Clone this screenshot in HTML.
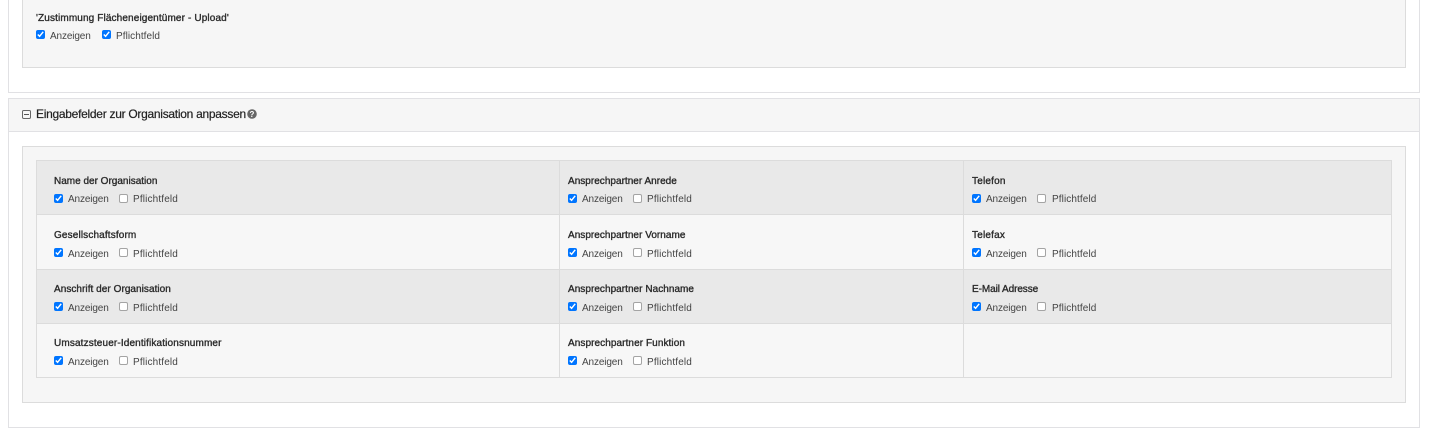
<!DOCTYPE html>
<html lang="de"><head><meta charset="utf-8"><title>Eingabefelder</title>
<style>
html,body{margin:0;padding:0;background:#fff;width:1429px;height:436px;overflow:hidden;font-family:"Liberation Sans",sans-serif}
.b{position:absolute;box-sizing:border-box}
.t{position:absolute;white-space:nowrap;font-size:10px;line-height:14px;height:14px;color:#444;letter-spacing:.15px}
.a{letter-spacing:-.13px}
.p{letter-spacing:.1px}
.l{color:#2b2b2b;-webkit-text-stroke:.35px #2b2b2b;letter-spacing:.04px}
input{position:absolute;margin:0;width:9px;height:9px;accent-color:#0075ff}
input:not(:checked){appearance:none;-webkit-appearance:none;box-sizing:border-box;border:1px solid #a4a4a4;border-radius:2px;background:#fff}
</style></head><body>
<div class="b" style="left:8px;top:-2px;width:1412px;height:95px;border:1px solid #e1e1e4"></div>
<div class="b" style="left:22px;top:-2px;width:1384px;height:70px;background:#f6f6f6;border:1px solid #dcdcdc"></div>
<span class="t l" style="left:36px;top:12px;letter-spacing:.13px">'Zustimmung Flächeneigentümer - Upload'</span>
<input type="checkbox" checked style="left:36px;top:30px"><span class="t a" style="left:50px;top:30px">Anzeigen</span>
<input type="checkbox" checked style="left:102px;top:30px"><span class="t" style="left:116px;top:30px;letter-spacing:.06px">Pflichtfeld</span>

<div class="b" style="left:8px;top:98px;width:1412px;height:330px;border:1px solid #e1e1e4"></div>
<div class="b" style="left:8px;top:98px;width:1412px;height:34px;background:#f6f6f6;border:1px solid #e1e1e4"></div>
<svg class="b" style="left:22px;top:110px" width="9" height="9" viewBox="0 0 9 9"><rect x=".5" y=".5" width="8" height="8" rx="1.2" fill="none" stroke="#666"/><path d="M2 4.5H7" stroke="#555"/></svg>
<span class="t" style="left:36px;top:107px;font-size:12px;color:#222;-webkit-text-stroke:.2px #222;letter-spacing:-.28px">Eingabefelder zur Organisation anpassen</span>
<svg class="b" style="left:247px;top:109px" width="10" height="10" viewBox="0 0 10 10"><circle cx="5" cy="5" r="4.8" fill="#666"/><text x="5" y="8" font-size="8" font-weight="bold" text-anchor="middle" fill="#fff" font-family="Liberation Sans">?</text></svg>

<div class="b" style="left:22px;top:146px;width:1384px;height:257px;background:#f6f6f6;border:1px solid #dcdcdc"></div>
<div class="b" style="left:36px;top:160px;width:1356px;height:218px;background:#f7f7f7;border:1px solid #dcdcdc"></div>
<div class="b" style="left:37px;top:161px;width:1354px;height:53px;background:#e9e9e9"></div>
<div class="b" style="left:37px;top:270px;width:1354px;height:53px;background:#e9e9e9"></div>
<div class="b" style="left:37px;top:214px;width:1354px;height:1px;background:#dcdcdc"></div>
<div class="b" style="left:37px;top:269px;width:1354px;height:1px;background:#dcdcdc"></div>
<div class="b" style="left:37px;top:323px;width:1354px;height:1px;background:#dcdcdc"></div>
<div class="b" style="left:559px;top:161px;width:1px;height:216px;background:#dcdcdc"></div>
<div class="b" style="left:963px;top:161px;width:1px;height:216px;background:#dcdcdc"></div>

<span class="t l" style="left:54px;top:175px;letter-spacing:0">Name der Organisation</span>
<input type="checkbox" checked style="left:54px;top:194px"><span class="t a" style="left:68px;top:193px">Anzeigen</span>
<input type="checkbox" style="left:119px;top:194px"><span class="t" style="left:133px;top:193px">Pflichtfeld</span>
<span class="t l" style="left:54px;top:229px;letter-spacing:.14px">Gesellschaftsform</span>
<input type="checkbox" checked style="left:54px;top:248px"><span class="t a" style="left:68px;top:248px">Anzeigen</span>
<input type="checkbox" style="left:119px;top:248px"><span class="t" style="left:133px;top:248px">Pflichtfeld</span>
<span class="t l" style="left:54px;top:283px;letter-spacing:.05px">Anschrift der Organisation</span>
<input type="checkbox" checked style="left:54px;top:302px"><span class="t a" style="left:68px;top:302px">Anzeigen</span>
<input type="checkbox" style="left:119px;top:302px"><span class="t" style="left:133px;top:302px">Pflichtfeld</span>
<span class="t l" style="left:54px;top:337px;letter-spacing:.14px">Umsatzsteuer-Identifikationsnummer</span>
<input type="checkbox" checked style="left:54px;top:356px"><span class="t a" style="left:68px;top:356px">Anzeigen</span>
<input type="checkbox" style="left:119px;top:356px"><span class="t" style="left:133px;top:356px">Pflichtfeld</span>

<span class="t l" style="left:568px;top:175px;letter-spacing:.02px">Ansprechpartner Anrede</span>
<input type="checkbox" checked style="left:568px;top:194px"><span class="t a" style="left:582px;top:193px">Anzeigen</span>
<input type="checkbox" style="left:633px;top:194px"><span class="t" style="left:647px;top:193px">Pflichtfeld</span>
<span class="t l" style="left:568px;top:229px;letter-spacing:.03px">Ansprechpartner Vorname</span>
<input type="checkbox" checked style="left:568px;top:248px"><span class="t a" style="left:582px;top:248px">Anzeigen</span>
<input type="checkbox" style="left:633px;top:248px"><span class="t" style="left:647px;top:248px">Pflichtfeld</span>
<span class="t l" style="left:568px;top:283px">Ansprechpartner Nachname</span>
<input type="checkbox" checked style="left:568px;top:302px"><span class="t a" style="left:582px;top:302px">Anzeigen</span>
<input type="checkbox" style="left:633px;top:302px"><span class="t" style="left:647px;top:302px">Pflichtfeld</span>
<span class="t l" style="left:568px;top:337px;letter-spacing:.08px">Ansprechpartner Funktion</span>
<input type="checkbox" checked style="left:568px;top:356px"><span class="t a" style="left:582px;top:356px">Anzeigen</span>
<input type="checkbox" style="left:633px;top:356px"><span class="t" style="left:647px;top:356px">Pflichtfeld</span>

<span class="t l" style="left:972px;top:175px;letter-spacing:.2px">Telefon</span>
<input type="checkbox" checked style="left:972px;top:194px"><span class="t a" style="left:986px;top:193px">Anzeigen</span>
<input type="checkbox" style="left:1037px;top:194px"><span class="t p" style="left:1052px;top:193px">Pflichtfeld</span>
<span class="t l" style="left:972px;top:229px;letter-spacing:.2px">Telefax</span>
<input type="checkbox" checked style="left:972px;top:248px"><span class="t a" style="left:986px;top:248px">Anzeigen</span>
<input type="checkbox" style="left:1037px;top:248px"><span class="t p" style="left:1052px;top:248px">Pflichtfeld</span>
<span class="t l" style="left:972px;top:283px;letter-spacing:-.08px">E-Mail Adresse</span>
<input type="checkbox" checked style="left:972px;top:302px"><span class="t a" style="left:986px;top:302px">Anzeigen</span>
<input type="checkbox" style="left:1037px;top:302px"><span class="t p" style="left:1052px;top:302px">Pflichtfeld</span>
</body></html>
